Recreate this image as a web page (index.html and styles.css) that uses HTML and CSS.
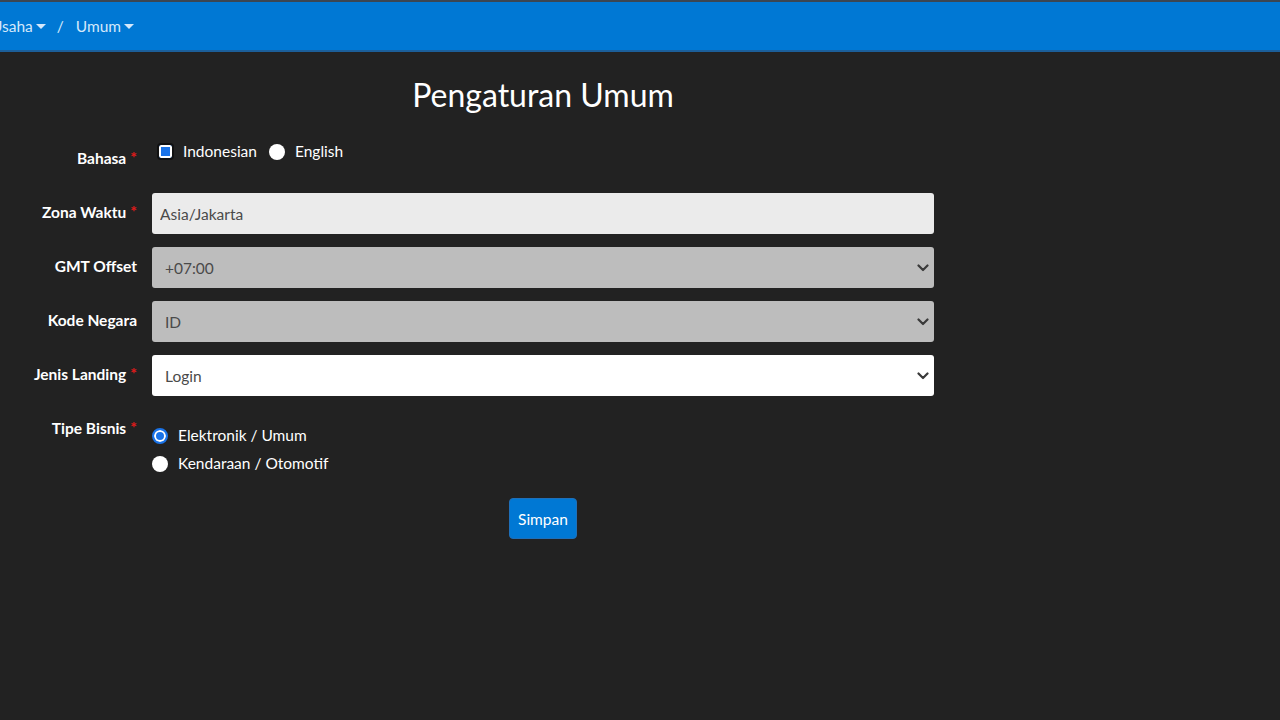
FILE: index.html
```html
<!DOCTYPE html>
<html lang="id">
<head>
    <meta charset="UTF-8">
    <title>Pengaturan Umum</title>
    <link rel="stylesheet" href="styles.css">
</head>
<body>
    <header class="topbar">
        <nav class="crumbs">
            <span class="crumb">Usaha<span class="caret"></span></span>
            <span class="sep">/</span>
            <span class="crumb">Umum<span class="caret"></span></span>
        </nav>
    </header>

    <main class="page">
        <h1 class="title">Pengaturan Umum</h1>

        <form class="form">
            <div class="row row-lang">
                <label class="label">Bahasa<span class="req">*</span></label>
                <div class="options inline">
                    <label class="opt"><span class="box checked"></span>Indonesian</label>
                    <label class="opt"><input type="radio" name="lang" class="radio">English</label>
                </div>
            </div>

            <div class="row">
                <label class="label">Zona Waktu<span class="req">*</span></label>
                <input class="field" type="text" value="Asia/Jakarta">
            </div>

            <div class="row">
                <label class="label">GMT Offset</label>
                <div class="field select disabled">
                    <span>+07:00</span>
                    <svg class="chev" width="12" height="8" viewBox="0 0 12 8"><path d="M1.5 1.5 6 6l4.5-4.5" fill="none" stroke="#3a3a3a" stroke-width="2.2" stroke-linecap="round" stroke-linejoin="round"/></svg>
                </div>
            </div>

            <div class="row">
                <label class="label">Kode Negara</label>
                <div class="field select disabled">
                    <span>ID</span>
                    <svg class="chev" width="12" height="8" viewBox="0 0 12 8"><path d="M1.5 1.5 6 6l4.5-4.5" fill="none" stroke="#3a3a3a" stroke-width="2.2" stroke-linecap="round" stroke-linejoin="round"/></svg>
                </div>
            </div>

            <div class="row">
                <label class="label">Jenis Landing<span class="req">*</span></label>
                <div class="field select">
                    <span>Login</span>
                    <svg class="chev" width="12" height="8" viewBox="0 0 12 8"><path d="M1.5 1.5 6 6l4.5-4.5" fill="none" stroke="#3a3a3a" stroke-width="2.2" stroke-linecap="round" stroke-linejoin="round"/></svg>
                </div>
            </div>

            <div class="row row-type">
                <label class="label">Tipe Bisnis<span class="req">*</span></label>
                <div class="options stacked">
                    <label class="opt"><input type="radio" name="type" class="radio" checked>Elektronik / Umum</label>
                    <label class="opt"><input type="radio" name="type" class="radio">Kendaraan / Otomotif</label>
                </div>
            </div>

            <div class="actions">
                <button type="button" class="btn">Simpan</button>
            </div>
        </form>
    </main>
</body>
</html>
```

FILE: styles.css
```css
* {
    margin: 0;
    padding: 0;
    box-sizing: border-box;
}
body {
    font-family: Lato, "Open Sans", sans-serif;
    background: #222222;
    color: #ffffff;
    overflow: hidden;
}
.topbar {
    height: 52px;
    background: #0078d4;
    border-top: 2px solid #3b4652;
    border-bottom: 2px solid #1c5f9a;
    display: flex;
    align-items: center;
}
.crumbs {
    display: flex;
    align-items: center;
    margin-left: -9px;
    font-size: 15.5px;
    color: #d4e8fb;
}
.crumb {
    display: flex;
    align-items: center;
}
.caret {
    width: 0;
    height: 0;
    margin-left: 3px;
    border-left: 5px solid transparent;
    border-right: 5px solid transparent;
    border-top: 5px solid #d4e8fb;
}
.sep {
    margin: 0 12px 0 11px;
}
.page {
    width: 934px;
}
.title {
    margin: 23px 0 0 152px;
    text-align: center;
    font-size: 32px;
    font-weight: 400;
    line-height: 40px;
}
.form {
    display: flex;
    flex-direction: column;
    gap: 13px;
    margin-top: 23px;
}
.row {
    display: grid;
    grid-template-columns: 137px 782px;
    column-gap: 15px;
    align-items: start;
}
.label {
    text-align: right;
    font-size: 15.5px;
    font-weight: 700;
    line-height: 20px;
    padding-top: 9px;
    white-space: nowrap;
}
.req {
    color: #e01b1b;
    font-size: 16px;
    line-height: 0;
    vertical-align: 1px;
    margin-left: 4px;
}
.row-lang {
    height: 42px;
}
.row-lang .label {
    padding-top: 10px;
}
.options {
    font-size: 15.5px;
    line-height: 20px;
}
.inline {
    display: flex;
    align-items: center;
    padding-top: 3px;
}
.stacked {
    display: flex;
    flex-direction: column;
    gap: 8px;
    padding-top: 16px;
}
.opt {
    display: flex;
    align-items: center;
}
.inline .opt + .opt {
    margin-left: 12px;
}
.box {
    width: 17px;
    height: 17px;
    margin: 0 9px 0 5px;
    border-radius: 4px;
    border: 2px solid #111;
    background: #1a73e8;
    box-shadow: inset 0 0 0 2px #ffffff;
}
.radio {
    appearance: none;
    width: 16px;
    height: 16px;
    margin: 2px 10px 0 0;
    border-radius: 50%;
    background: #ffffff;
}
.radio:checked {
    background: #1a73e8;
    border: 2px solid #1a73e8;
    box-shadow: inset 0 0 0 2px #ffffff;
}
.inline .radio {
    margin: 2px 10px 0 0;
}
.field {
    height: 41px;
    border: none;
    border-radius: 3px;
    background: #ffffff;
    font-family: inherit;
    font-size: 15.5px;
    color: #4a4a4a;
    padding: 0 8px;
    outline: none;
}
input.field {
    background: #ebebeb;
}
.select {
    display: flex;
    align-items: center;
    justify-content: space-between;
    padding: 0 5px 0 13px;
}
.select.disabled {
    background: #bdbdbd;
}
.chev {
    display: block;
}
.actions {
    display: flex;
    justify-content: center;
    padding-left: 152px;
    margin-top: 12px;
}
.btn {
    height: 41px;
    padding: 0 8px;
    border: 1px solid #1f6fb8;
    border-radius: 4px;
    background: #0078d4;
    color: #ffffff;
    font-family: inherit;
    font-size: 15.5px;
}
```
